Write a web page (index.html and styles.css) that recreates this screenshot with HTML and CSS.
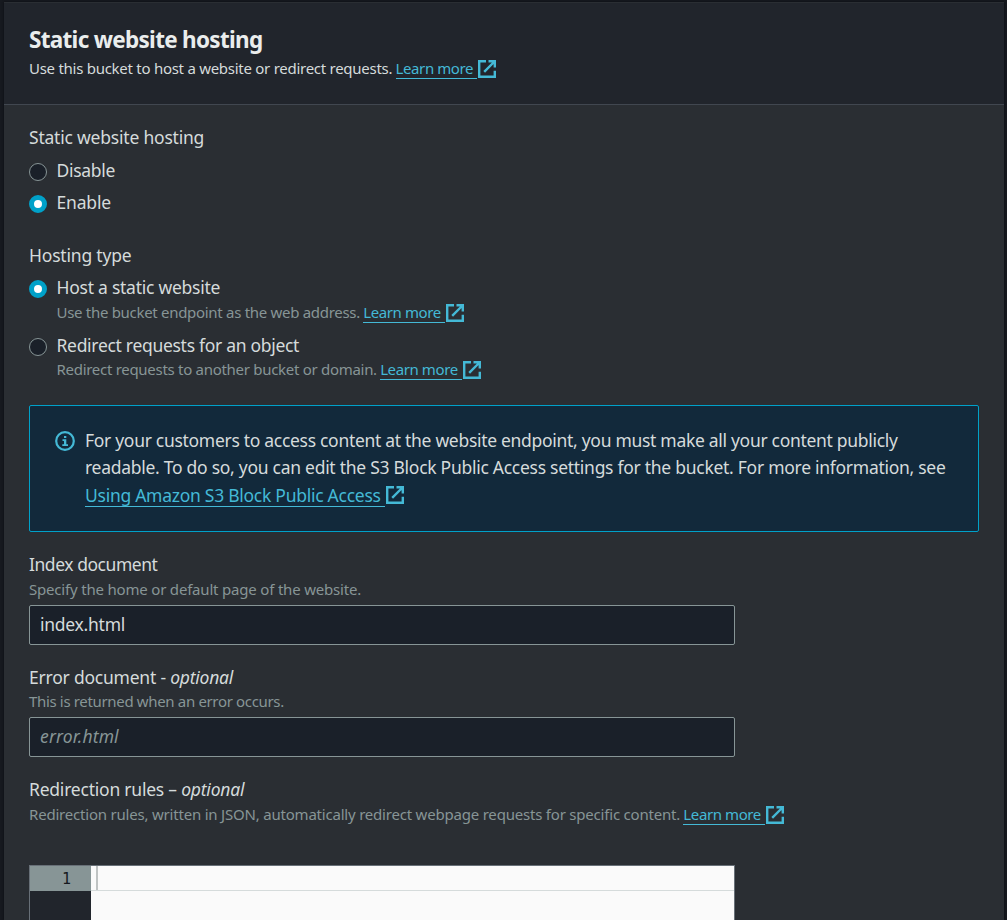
FILE: index.html
```html
<!DOCTYPE html>
<html lang="en">
<head>
<meta charset="utf-8">
<title>Static website hosting</title>
<link rel="stylesheet" href="styles.css">
</head>
<body>
<svg width="0" height="0" class="defs">
  <symbol id="external" viewBox="0 0 18 18"><path d="M8 1.2H1.2v15.6h15.6V10.8M10.5 1.2h6.3v6.3M16.5 1.5L6.2 11.8" fill="none" stroke="currentColor" stroke-width="2.4"/></symbol>
</svg>
<main class="panel">
  <header class="panel-header">
    <h2 class="title"><span class="t-title">Static website hosting</span></h2>
    <p class="sub light"><span class="t-intro">Use this bucket to host a website or redirect requests.</span> <a class="link"><span class="link-text">Learn more</span><svg class="ext"><use href="#external"/></svg></a></p>
  </header>
  <div class="content">
    <section class="group">
      <div class="label"><span class="t-static">Static website hosting</span></div>
      <div class="option"><span class="radio"></span><div class="label"><span class="t-disable">Disable</span></div></div>
      <div class="option"><span class="radio checked"></span><div class="label"><span class="t-enable">Enable</span></div></div>
    </section>
    <section class="group hosting">
      <div class="label"><span class="t-type">Hosting type</span></div>
      <div class="option"><span class="radio checked"></span><div>
        <div class="label"><span class="t-host">Host a static website</span></div>
        <p class="sub"><span class="t-endpoint">Use the bucket endpoint as the web address.</span> <a class="link"><span class="link-text">Learn more</span><svg class="ext"><use href="#external"/></svg></a></p>
      </div></div>
      <div class="option redirect"><span class="radio"></span><div>
        <div class="label"><span class="t-redirect">Redirect requests for an object</span></div>
        <p class="sub"><span class="t-another">Redirect requests to another bucket or domain.</span> <a class="link"><span class="link-text">Learn more</span><svg class="ext"><use href="#external"/></svg></a></p>
      </div></div>
    </section>
    <aside class="alert">
      <svg class="info" viewBox="0 0 20 20"><circle cx="10" cy="10" r="8.8" fill="none" stroke="currentColor" stroke-width="2.2"/><path d="M9 5h2.3v2H9zM7.5 8.3h3.8v4.9H13V15H7.3v-1.8H9V10H7.5z" fill="currentColor"/></svg>
      <p class="alert-text"><span class="t-alert1">For your customers to access content at the website endpoint, you must make all your content publicly</span><br><span class="t-alert2">readable. To do so, you can edit the S3 Block Public Access settings for the bucket. For more information, see</span><br><a class="link"><span class="link-text t-using">Using Amazon S3 Block Public Access</span><svg class="ext"><use href="#external"/></svg></a></p>
    </aside>
    <section class="field">
      <div class="label"><span class="t-index">Index document</span></div>
      <p class="sub"><span class="t-specify">Specify the home or default page of the website.</span></p>
      <div class="input"><span class="t-value">index.html</span></div>
    </section>
    <section class="field second">
      <div class="label"><span class="t-error">Error document - <i>optional</i></span></div>
      <p class="sub"><span class="t-returned">This is returned when an error occurs.</span></p>
      <div class="input placeholder"><span class="t-placeholder">error.html</span></div>
    </section>
    <section class="field third">
      <div class="label"><span class="t-rules">Redirection rules – <i>optional</i></span></div>
      <p class="sub"><span class="t-json">Redirection rules, written in JSON, automatically redirect webpage requests for specific content.</span> <a class="link"><span class="link-text">Learn more</span><svg class="ext"><use href="#external"/></svg></a></p>
      <div class="editor">
        <div class="gutter"><div class="line-no">1</div></div>
        <div class="code"><div class="active-line"><span class="cursor"></span></div></div>
      </div>
    </section>
  </div>
</main>
</body>
</html>
```
FILE: styles.css
```css
* { box-sizing: border-box; }
body { margin: 0; height: 920px; overflow: hidden; background: #16191f; color: #d5dbdb; font-family: "Noto Sans", sans-serif; font-size: 17.5px; }
h2, p { margin: 0; }
.defs { display: block; position: absolute; }
.panel { margin: 2px 3px 0 4px; height: 918px; overflow: hidden; background: #2a2e33; border-top: 1px solid #2a2e33; box-shadow: 0 0 2px #0b0d10; }
.panel-header { height: 102px; padding: 22px 25px 0; background: #21252c; border-bottom: 1px solid #414750; }
.title { color: #eaeded; font-size: 22.5px; line-height: 30px; font-weight: 700; white-space: nowrap; }
.sub { display: flex; align-items: center; height: 22px; line-height: 20px; font-size: 15px; color: #879596; white-space: nowrap; }
.sub > span { padding-bottom: 2px; }
.panel-header .sub { margin-top: 3px; }
.sub.light { color: #d5dbdb; }
.link { display: inline-flex; align-items: center; color: #44b9d6; }
.sub .link { margin-left: 3.3px; }
.link-text { border-bottom: 1px solid #44b9d6; padding-right: 4px; line-height: 19px; letter-spacing: -0.4px; }
.ext { width: 18px; height: 18px; margin-left: 1px; flex: none; }
.content { padding: 19px 25px 0; }
.label { height: 28px; line-height: 26px; white-space: nowrap; }
.option { display: flex; gap: 9.5px; margin-top: 4px; }
.group > .label + .option { margin-top: 5px; }
.radio { width: 18px; height: 18px; margin-top: 6px; border-radius: 50%; border: 1px solid #879596; background: #1a2029; flex: none; }
.checked { border: 5.5px solid #00a1c9; background: #fff; }
.hosting { margin-top: 25px; }
.hosting > .label + .option { margin-top: 4px; }
.hosting .redirect { margin-top: 8px; }
.redirect .sub { margin-top: -1px; }
.alert { display: flex; gap: 10px; height: 127px; margin-top: 24px; padding: 20.6px 25px 0; border: 1px solid #00a1c9; border-radius: 2px; background: #12293b; }
.info { width: 20px; height: 20px; margin-top: 4.4px; color: #44b9d6; flex: none; }
.alert-text { line-height: 27.5px; white-space: nowrap; }
.alert .link-text { line-height: 22px; letter-spacing: -0.27px; }
.field { margin-top: 19px; width: 706px; }
.second .sub { margin-top: -1px; }
.input { height: 40px; margin-top: 4px; padding: 0 10px; border: 1px solid #879596; border-radius: 2px; background: #1a2029; line-height: 36px; }
.placeholder { color: #879596; font-style: italic; }
.editor { display: flex; height: 80px; margin-top: 39px; border: 1px solid #687078; }
.gutter { width: 61px; background: #21252c; }
.line-no { height: 25px; padding-right: 20px; background: #879596; color: #16191f; font: 15px/26px "DejaVu Sans Mono", monospace; text-align: right; }
.code { flex: 1; background: #fafafa; }
.active-line { height: 25px; padding-left: 5px; border-bottom: 1px solid #d5dbdb; }
.cursor { display: block; width: 2px; height: 24px; background: #bfc3c3; }

/* Tracking per text run */
.t-title { letter-spacing: -0.7px; }
.t-intro { letter-spacing: -0.27px; }
.t-static { letter-spacing: -0.21px; }
.t-disable { letter-spacing: -0.3px; }
.t-enable { letter-spacing: -0.17px; }
.t-type { letter-spacing: -0.2px; }
.t-host { letter-spacing: -0.25px; }
.t-endpoint { letter-spacing: -0.3px; }
.t-redirect { letter-spacing: -0.3px; }
.t-another { letter-spacing: -0.29px; }
.t-alert1 { letter-spacing: -0.3px; }
.t-alert2 { letter-spacing: -0.275px; }
.t-index { letter-spacing: -0.45px; }
.t-specify { letter-spacing: -0.19px; }
.t-value { letter-spacing: -0.25px; }
.t-error { letter-spacing: -0.22px; }
.t-returned { letter-spacing: -0.34px; }
.t-placeholder { letter-spacing: 0.15px; }
.t-rules { letter-spacing: -0.22px; }
.t-json { letter-spacing: -0.205px; }
```
